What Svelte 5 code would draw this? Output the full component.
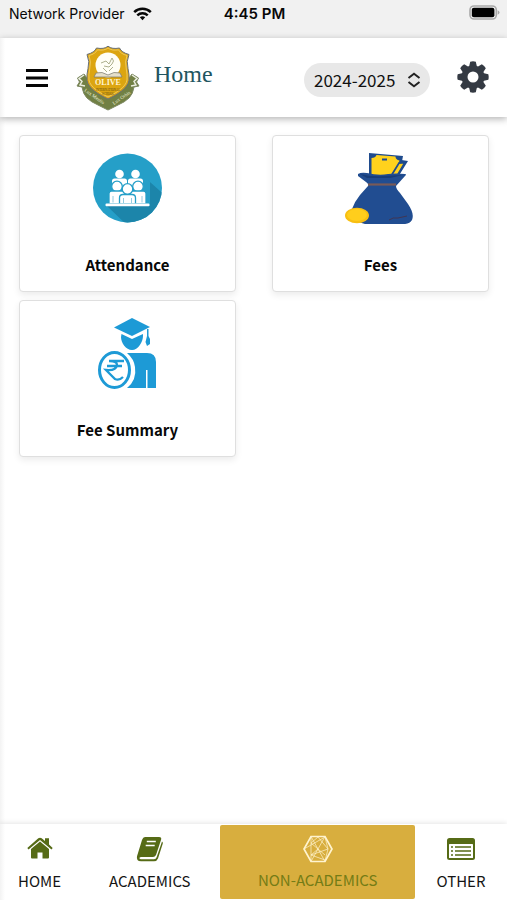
<script>
  let year = $state('2024-2025');
  const years = ['2024-2025', '2023-2024'];
  const cards = [
    { id: 'attendance', title: 'Attendance' },
    { id: 'fees', title: 'Fees' },
    { id: 'summary', title: 'Fee Summary' }
  ];
</script>

<div class="app">
  <div class="status">
    <div class="carrier">
      <span>Network Provider</span>
      <svg width="19" height="14" viewBox="0 0 19 14" fill="none" stroke="#080808" stroke-width="2.5" aria-hidden="true">
        <path d="M1.2 5.2C5.8.7 13.2.7 17.8 5.2" />
        <path d="M4.3 8.3C7.3 5.5 11.7 5.5 14.7 8.3" />
        <path d="M6.8 10.2C8.4 8.9 10.6 8.9 12.2 10.2L9.5 13.2Z" fill="#080808" stroke="none" />
      </svg>
    </div>
    <strong>4:45 PM</strong>
    <svg class="battery" width="31" height="15" viewBox="0 0 31 15" aria-hidden="true">
      <rect x="1" y="1" width="26.3" height="13" rx="4" fill="#f1f1f1" stroke="#a9a9a9" stroke-width="1.6" />
      <rect x="2.8" y="2.8" width="22.6" height="9.4" rx="2" fill="#000" />
      <path d="M28.7 5.2q1.8.8 1.8 2.3t-1.8 2.3z" fill="#a9a9a9" />
    </svg>
  </div>

  <header>
    <button class="menu" aria-label="Menu">
      <svg width="24" height="20" viewBox="0 0 24 20" stroke="#050505" stroke-width="3">
        <path d="M1 2.5h22M1 10h22M1 17.5h22" />
      </svg>
    </button>
    <svg class="crest" width="64" height="66" viewBox="0 0 64 66" aria-label="Olive International School">
      <path d="M8 29L1.500 33l2 4L1 41l5 1q1 7 5 11 4 4 11 7l10 5 10-5q7-3 11-7 4-4 5-11l5-1-2.500-4 2-4L56 29l-6 8-18 16L14 37z" fill="#718044" stroke="#7e8964" />
      <path d="M8 30l-5 3.500 3 3-2 3.500 5 1M56 30l5 3.500-3 3 2 3.500-5 1" fill="none" stroke="#eceee1" stroke-width="1.500" />
      <path d="M32 1.200Q28 4.500 20.500 3q-2 4.500-9.500 6.500 3 7 1 14-1.500 6-1 12C12 43 23 50 32 54c9-4 20-11 21-18.500q.5-6-1-12-2-7 1-14-7.500-2-9.500-6.500Q36 4.500 32 1.200z" fill="#dca510" stroke="#697078" stroke-width="1" />
      <path d="M32 3Q28 6 21.500 4.800q-2 4-8.500 5.700 2.500 6 .7 13.500-1.200 6-.7 11C14 42 24 48 32 52c8-4 18-10 19-17q.5-5-.7-11-1.800-7.500.7-13.500-6.500-1.700-8.500-5.700Q36 6 32 3z" fill="none" stroke="#f2d16d" stroke-width=".8" />
      <circle cx="32" cy="20" r="12.500" fill="#fffef5" />
      <path d="M20 28q6-2 12 2 6-4 12-2l2 4H18z" fill="#e5dfca" stroke="#77766c" stroke-width=".7" />
      <path d="M25 18l5-2 3 3 3-6q3 3 0 6l-3 3-5-1M31 27l-4-4M33 26l4-4" fill="none" stroke="#a4a781" stroke-width=".9" />
      <text x="32" y="40" class="crest-name">OLIVE</text>
      <text x="32" y="46" class="crest-small">INTERNATIONAL</text>
      <text x="32" y="50" class="crest-small">SCHOOL</text>
      <text class="motto" transform="translate(8 46) rotate(35)">Lux Mentis</text>
      <text class="motto" transform="translate(38 60) rotate(-35)">Lux Orbis</text>
    </svg>
    <h1>Home</h1>
    <label class="year">
      <select aria-label="Academic year" bind:value={year}>
        {#each years as y}<option>{y}</option>{/each}
      </select>
      <svg width="14" height="16" viewBox="0 0 14 16" fill="none" stroke="#222" stroke-width="2" aria-hidden="true">
        <path d="M1.500 6L7 1.700 12.500 6M1.500 10L7 14.300 12.500 10" />
      </svg>
    </label>
    <button class="settings" aria-label="Settings">
      <svg width="32" height="32" viewBox="0 0 32 32" fill="#343a43">
        {#each [0, 45, 90, 135] as a}
          <path d="M12 6L13.200.7Q16-.1 18.800.7L20 6V26l-1.200 5.300q-2.800.8-5.600 0L12 26z" transform="rotate({a} 16 16)" />
        {/each}
        <circle cx="16" cy="16" r="11.500" />
        <circle cx="16" cy="16" r="5.500" fill="#fff" />
      </svg>
    </button>
  </header>

  <main>
    {#each cards as card}
      <button class="card">
        {#if card.id === 'attendance'}
          <svg width="72" height="72" viewBox="0 0 72 72" aria-hidden="true">
            <defs><clipPath id="disc"><circle cx="35.500" cy="36" r="34.500" /></clipPath></defs>
            <circle cx="35.500" cy="36" r="34.500" fill="#259fc8" />
            <path d="M49 22L76 46V76H38L15 54H58V30z" fill="#1c85aa" clip-path="url(#disc)" />
            <g fill="#fff">
              <circle cx="27.500" cy="22" r="4.300" /><circle cx="43.500" cy="22" r="4.300" />
              <path d="M20 34v-5q0-2.500 2.500-2.500h10q2.500 0 2.500 2.500v5zM36 34v-5q0-2.500 2.500-2.500h10q2.500 0 2.500 2.500v5z" />
            </g>
            <g fill="#fff" stroke="#259fc8" stroke-width="1.300">
              <circle cx="25" cy="34.500" r="5.300" /><circle cx="46" cy="34.500" r="5.300" />
              <path d="M17 52V41.500q0-2.500 2.500-2.500h11q2.500 0 2.500 2.500V52zM38 52V41.500q0-2.500 2.500-2.500h11q2.500 0 2.500 2.500V52z" />
              <circle cx="35.500" cy="37" r="5.300" />
              <path d="M27.500 52v-6q0-3.500 3.500-3.500h9q3.500 0 3.500 3.500v6z" />
            </g>
            <path d="M21 44v6.500M50 44v6.500M31.500 46v5M39.500 46v5" stroke="#94cce0" />
            <rect x="13.500" y="51.500" width="44" height="2.700" rx="1" fill="#fff" />
          </svg>
        {:else if card.id === 'fees'}
          <svg width="72" height="72" viewBox="0 0 72 72" aria-hidden="true">
            <path d="M50 7l13 2-10 16H38z" fill="#1f4b8d" />
            <path d="M24 1l34 3-4 21-30-2z" fill="#1f4b8d" />
            <path d="M26.500 6q4 0 5-3l19 1.500q0 3 4 4L49 24H26.500z" fill="#ffd21d" />
            <path d="M54 11l6-.5L52 24h-6z" fill="#ffd21d" stroke="#1f4b8d" stroke-width="1.800" />
            <path d="M37 6.500h5v2h-5z" fill="#1f4b8d" />
            <path d="M13 22q3-2 9-1 12 3 21 1 8-1 17 0 2 0 0 2L51 34q0 3 4 7l8 11c4 6 6 11 4 16-2 4-7 4-14 5-10 .5-23 .500-33-1C8 69 5 64 7 57q3-8 8-14l8-9q1-2-2-4l-8-6z" fill="#214d91" />
            <path d="M15 22q12 3 23 2l20-1-13 3H22z" fill="#173d79" />
            <path d="M23 32.500h28" stroke="#795a57" stroke-width="2.200" />
            <path d="M44 68q4-3 9-2l9-2" fill="none" stroke="#403654" />
            <ellipse cx="12" cy="63.500" rx="12" ry="7.800" fill="#f8bf12" />
            <ellipse cx="12" cy="63" rx="10" ry="6" fill="#ffce1c" />
          </svg>
        {:else}
          <svg width="72" height="72" viewBox="0 0 72 72" aria-hidden="true">
            <g fill="#1d9ad6">
              <path d="M40 1L58 10 40 19 22 10.500z" />
              <path d="M29.500 17L40 22l11-5v2c0 6-5 14-11 14S29 26 29 20z" />
              <path d="M55 12h1.500v7l1.500 3v5l-3 2-1.500-4 1.500-6z" />
              <path d="M35 36H55q9 0 9 9V71H55.500V53H54V71H35q10-8 8-21-1-8-8-14z" />
            </g>
            <ellipse cx="22.500" cy="53" rx="15" ry="17.500" fill="#fff" stroke="#1d9ad6" stroke-width="3" />
            <path d="M17 44h15M15 49h15M18 44q7 0 7 4-1 6-11 5l9 9q4 2 8-2" fill="none" stroke="#1d9ad6" stroke-width="2.300" />
          </svg>
        {/if}
        <span>{card.title}</span>
      </button>
    {/each}
  </main>

  <nav>
    <a class="home" href="#home">
      <svg width="26" height="24" viewBox="0 0 26 24" fill="#566b16" aria-hidden="true">
        <path d="M.3 12L11.300 2.300q1.700-1.300 3.400 0L18 5V2.200h4v6.300L25.700 12 24.500 13.500 13 4 1.500 13.500z" />
        <path d="M4 13L13 5.500 22 13v8.500q0 1-1 1h-5.500v-6h-5v6H5q-1 0-1-1z" />
      </svg>
      HOME
    </a>
    <a class="academics" href="#academics">
      <svg width="28" height="26" viewBox="0 0 28 26" aria-hidden="true">
        <path d="M9 1h14q3 0 2 3l-5 15q-1 2-3 2H5q-2 0-1.500 1.500.3.800 1.500.8h13q2 0 2.600-2L26 5.500q1.200.8.800 2L22 22.500q-1 2.700-4 2.700H5q-5 0-4-5L6 4q1-3 3-3z" fill="#566b16" />
        <path d="M10.800 5.500h9M9.700 9.500h9" stroke="#fff" stroke-width="1.700" />
      </svg>
      ACADEMICS
    </a>
    <a class="nonacademics active" href="#non-academics" aria-current="page">
      <svg width="30" height="28" viewBox="0 0 30 28" fill="none" stroke="#fff4cf" aria-hidden="true">
        <path d="M8 1.500h14L29 14l-7 12.500H8L1 14z" stroke-width="1.700" />
        <path d="M8 1.500L22 26.500M22 1.500L8 26.500M8 2v24M1 14L22 2M8 8L22 20M22 2l3 12-3 12M8 20L25 14M15 14l-7 6 14 5M8 8l7-6 10 12" stroke-width=".7" />
      </svg>
      NON-ACADEMICS
    </a>
    <a class="other" href="#other">
      <svg width="28" height="22" viewBox="0 0 28 22" aria-hidden="true">
        <rect width="28" height="22" rx="2.500" fill="#566b16" />
        <rect x="2" y="6" width="24" height="14" rx=".6" fill="#fff" />
        <path d="M4 9h2M4 13h2M4 17h2M8 9h16M8 13h16M8 17h16" stroke="#566b16" stroke-width="1.700" />
      </svg>
      OTHER
    </a>
  </nav>
</div>

<style>
  :global(body) { margin: 0; background: #fff; }
  * { box-sizing: border-box; }
  svg { display: block; flex: none; }
  .app {
    min-height: 100vh;
    display: flex;
    flex-direction: column;
    color: #080808;
    font-family: "Noto Sans CJK SC", "Open Sans", sans-serif;
    background: linear-gradient(to right, #f3f3f3, #fff 5px);
  }
  button { font: inherit; color: inherit; border: 0; padding: 0; background: none; cursor: pointer; }
  .status {
    height: 38px;
    padding: 5px 7px 0 9px;
    display: grid;
    grid-template-columns: 1fr auto 1fr;
    align-items: start;
    background: #f1f1f1;
    font: 15px/18px Inter, sans-serif;
  }
  .status strong { font-weight: 600; }
  .carrier { display: flex; gap: 8px; align-items: center; white-space: nowrap; font-size: 14px; }
  .battery { justify-self: end; }
  header {
    height: 79px;
    padding: 0 18px 0 25px;
    display: flex;
    align-items: center;
    background: linear-gradient(to right, #f3f3f3, #fff 5px);
    box-shadow: 0 2px 7px #0000004d;
  }
  .crest { margin-left: 27px; }
  .crest text { text-anchor: middle; font-family: "Liberation Serif", serif; }
  .crest .crest-name { font-size: 8px; font-weight: bold; fill: #fff5d1; }
  .crest .crest-small { font-size: 3px; fill: #5c4d16; }
  .crest .motto { font-size: 5px; fill: #f4f5df; text-anchor: start; }
  h1 { margin: 0 auto 8px 14px; font: 24px/28px "Liberation Serif", serif; color: #225560; }
  .year { display: grid; align-items: center; margin-top: 4px; }
  .year select, .year svg { grid-area: 1 / 1; }
  .year svg { justify-self: end; margin-right: 9px; pointer-events: none; }
  .year select {
    appearance: none;
    width: 126px;
    height: 34px;
    padding: 0 24px 0 10px;
    border: 0;
    border-radius: 17px;
    background: #e8e8e8;
    color: #111;
    font: 17px/24px "Noto Sans CJK SC", sans-serif;
  }
  .settings { margin: 0 0 2px 27px; }
  main {
    flex: 1;
    padding: 18px 18px 18px 19px;
    display: grid;
    grid-template-columns: 1fr 1fr;
    grid-auto-rows: 157px;
    align-content: start;
    gap: 8px 36px;
  }
  .card {
    padding: 16px 0 14px;
    display: flex;
    flex-direction: column;
    align-items: center;
    justify-content: space-between;
    border: 1px solid #dfdfdf;
    border-radius: 4px;
    background: #fff;
    box-shadow: 0 3px 7px #00000014;
    font-weight: 700;
    font-size: 15px;
    line-height: 24px;
  }
  nav {
    display: flex;
    height: 76px;
    padding: 1px 0;
    background: linear-gradient(to right, #f3f3f3, #fff 5px);
    box-shadow: 0 -1px 5px #0000001a;
  }
  nav a {
    flex: 1 1 0;
    display: flex;
    flex-direction: column;
    align-items: center;
    justify-content: space-between;
    padding: 11px 0 6px;
    color: #151515;
    text-decoration: none;
    white-space: nowrap;
    font-size: 15px;
    line-height: 24px;
  }
  nav .home { flex-grow: 79; }
  nav .academics { flex-grow: 141; }
  nav .nonacademics { flex-grow: 194; padding: 10px 0 7px; }
  nav .other { flex-grow: 92; padding-top: 13px; }
  nav .active { color: #747c16; background: #d8ae3e; border-radius: 2px; }
</style>
